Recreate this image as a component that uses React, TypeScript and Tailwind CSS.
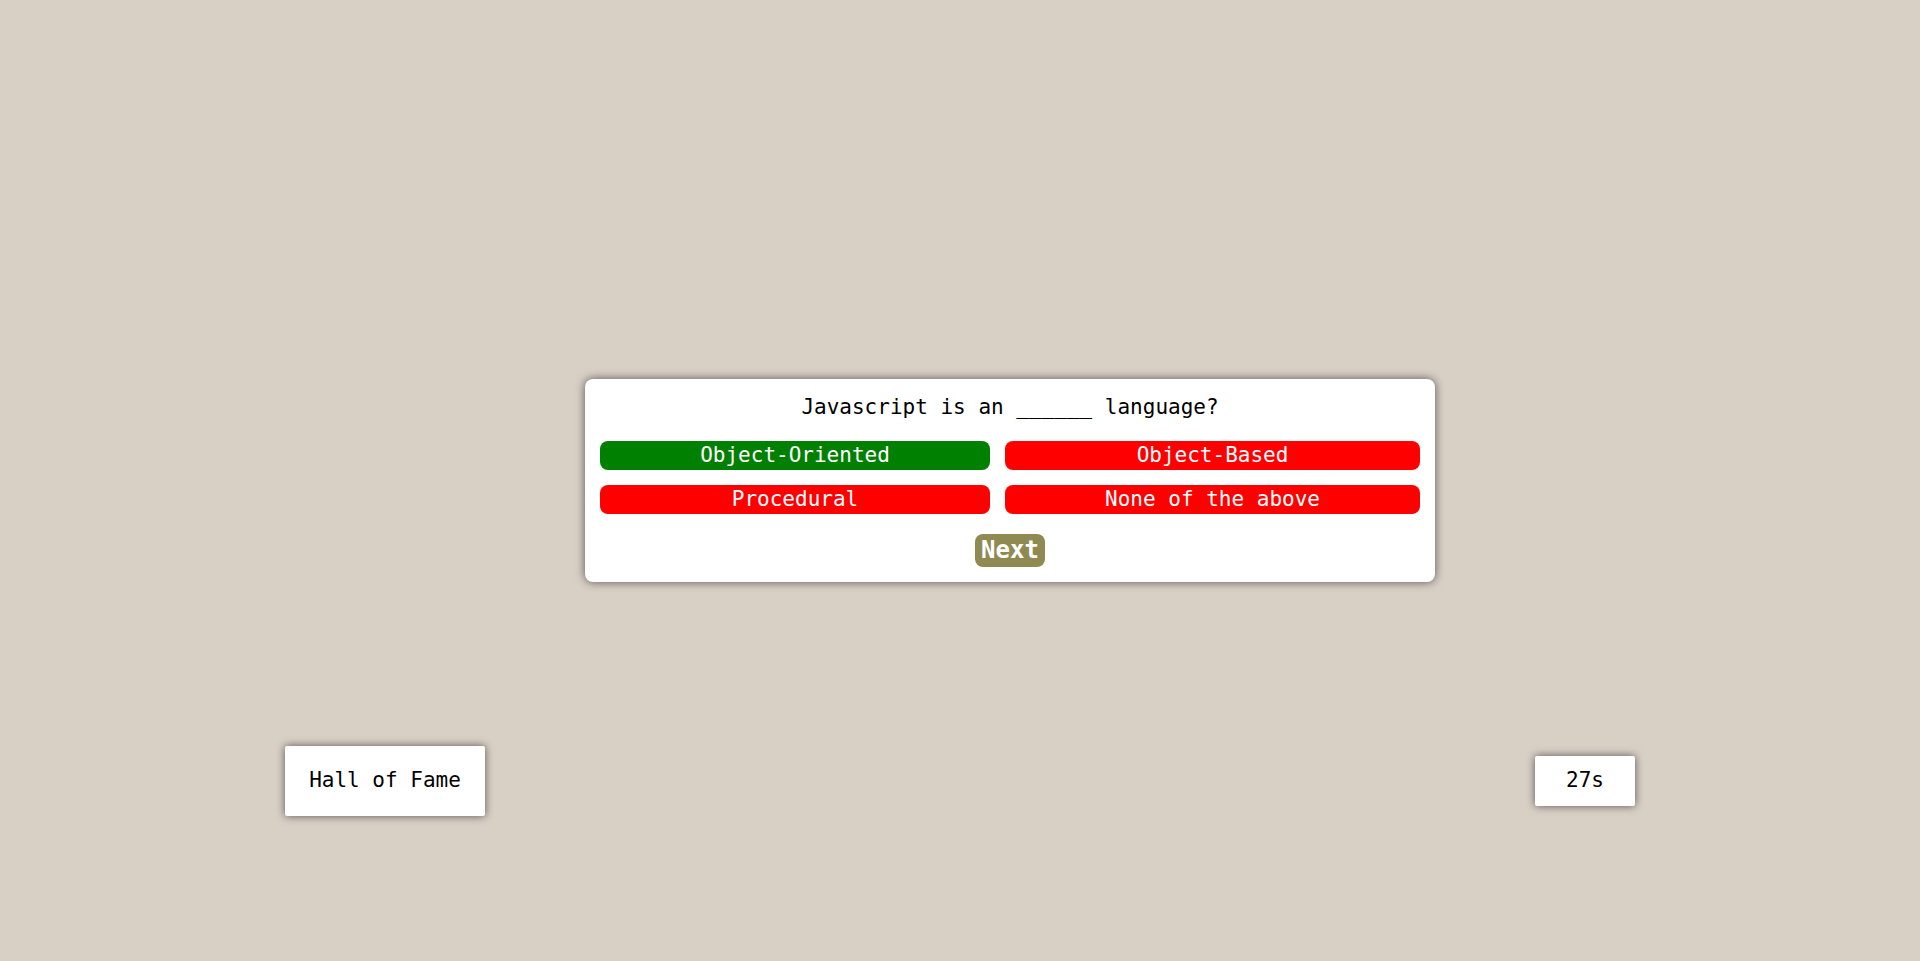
import { useState } from "react";

const options = [
  { label: "Object-Oriented", correct: true },
  { label: "Object-Based", correct: false },
  { label: "Procedural", correct: false },
  { label: "None of the above", correct: false },
];

export default function App() {
  const [seconds] = useState(27);

  return (
    <div
      className="min-h-screen w-full bg-[#d8cfc5] text-black"
      style={{ fontFamily: '"DejaVu Sans Mono", "Liberation Mono", monospace' }}
    >
      <div className="flex justify-center pl-[100px] pt-[379px]">
        <div className="w-[850px] rounded-[8px] bg-white px-[15px] pb-[15px] pt-[12px] shadow-[0_0_10px_rgba(0,0,0,0.6)]">
          <p className="text-center text-[21px] leading-[32px]">
            Javascript is an ______ language?
          </p>
          <div className="mt-[18px] grid grid-cols-[390px_415px] gap-[15px]">
            {options.map((o) => (
              <button
                key={o.label}
                className={`h-[29px] rounded-[8px] text-[21px] leading-[29px] text-white ${
                  o.correct ? "bg-[#008000]" : "bg-[#ff0000]"
                }`}
              >
                {o.label}
              </button>
            ))}
          </div>
          <div className="mt-[20px] flex justify-center">
            <button className="h-[33px] rounded-[8px] bg-[#8f8a52] px-[6px] text-[24px] font-bold leading-[33px] text-white">
              Next
            </button>
          </div>
        </div>
      </div>

      <div className="mt-[164px] flex items-center justify-between pl-[285px] pr-[285px]">
        <div className="flex h-[70px] w-[200px] items-center justify-center rounded-[2px] bg-white text-[21px] shadow-[0_0_8px_rgba(0,0,0,0.6)]">
          Hall of Fame
        </div>
        <div className="flex h-[50px] w-[100px] items-center justify-center rounded-[2px] bg-white text-[21px] shadow-[0_0_8px_rgba(0,0,0,0.6)]">
          {seconds}s
        </div>
      </div>
    </div>
  );
}
